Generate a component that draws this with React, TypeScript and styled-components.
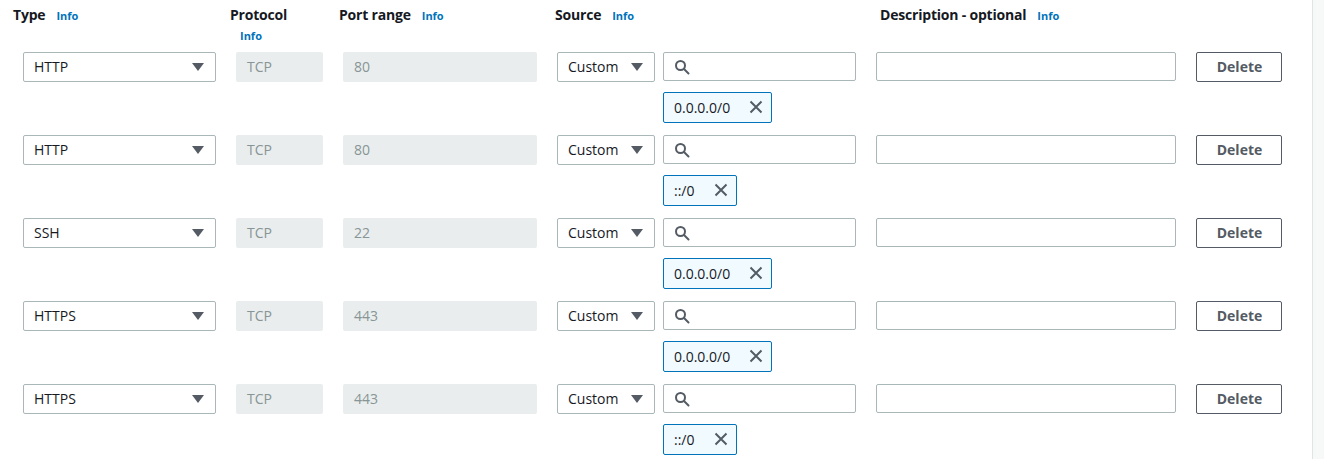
import React from "react";
import styled, { createGlobalStyle } from "styled-components";

const Global = createGlobalStyle`
  html, body { margin: 0; padding: 0; background: #ffffff; }
  body { font-family: "Open Sans", "Noto Sans", Arial, sans-serif; color: #16191f; }
  * { box-sizing: border-box; }
`;

const Page = styled.div`
  display: flex;
  width: 1324px;
  height: 459px;
  overflow: hidden;
`;

const Main = styled.div`
  width: 1313px;
  border-right: 1px solid #e1e4e5;
  padding-top: 5px;
`;

const Side = styled.div`
  flex: 1;
  background: #f7f8f8;
`;

const HeaderRow = styled.div`
  display: flex;
  padding-left: 13px;
  height: 47px;
`;

const HeaderCell = styled.div<{ $w?: number; $stack?: boolean }>`
  width: ${(p) => (p.$w ? `${p.$w}px` : "auto")};
  display: flex;
  flex-direction: ${(p) => (p.$stack ? "column" : "row")};
  align-items: flex-start;
  column-gap: 11px;
`;

const Label = styled.span`
  font-size: 14px;
  font-weight: 700;
  line-height: 20px;
  letter-spacing: -0.2px;
`;

const Info = styled.span<{ $indent?: number }>`
  font-size: 11px;
  font-weight: 700;
  color: #0073bb;
  line-height: 20px;
  padding-top: 1px;
  margin-left: ${(p) => p.$indent ?? 0}px;
`;

const Rows = styled.div`
  display: flex;
  flex-direction: column;
  padding-left: 23px;
`;

const Row = styled.div`
  display: grid;
  grid-template-columns: 193px 87px 194px 299px 300px 86px;
  column-gap: 20px;
  height: 83px;
  align-items: start;
`;

const Select = styled.div<{ $w?: number }>`
  height: 30px;
  border: 1px solid #aab7b8;
  border-radius: 2px;
  display: flex;
  align-items: center;
  justify-content: space-between;
  padding: 0 11px 1px 10px;
  font-size: 14px;
  width: ${(p) => (p.$w ? `${p.$w}px` : "auto")};
  flex-shrink: 0;
`;

const Caret = styled.span`
  width: 0;
  height: 0;
  border-left: 6px solid transparent;
  border-right: 6px solid transparent;
  border-top: 8px solid #545b64;
  margin-top: 1px;
`;

const Disabled = styled.div`
  height: 30px;
  background: #eaeded;
  border-radius: 2px;
  display: flex;
  align-items: center;
  padding: 0 0 1px 11px;
  font-size: 14px;
  color: #879596;
`;

const SourceCell = styled.div`
  display: flex;
  gap: 8px;
  align-items: flex-start;
`;

const SearchCol = styled.div`
  display: flex;
  flex-direction: column;
  gap: 11px;
  flex: 1;
`;

const TextInput = styled.div`
  height: 29px;
  border: 1px solid #aab7b8;
  border-radius: 2px;
  display: flex;
  align-items: center;
  padding-left: 10px;
`;

const Token = styled.div`
  align-self: flex-start;
  height: 31px;
  border: 1px solid #0073bb;
  background: #f1faff;
  border-radius: 2px;
  display: flex;
  align-items: center;
  gap: 18px;
  padding: 0 7px 1px 10px;
  font-size: 14px;
`;

const DeleteButton = styled.button`
  height: 30px;
  border: 1px solid #545b64;
  border-radius: 2px;
  background: #ffffff;
  color: #545b64;
  font-family: inherit;
  font-size: 14px;
  font-weight: 700;
  padding: 0 0 1px 1px;
`;

const SearchIcon = () => (
  <svg width="16" height="16" viewBox="0 0 16 16" fill="none" stroke="#545b64" strokeWidth="2">
    <circle cx="6.5" cy="6.5" r="4.5" />
    <path d="M10 10l4.5 4.5" strokeLinecap="round" />
  </svg>
);

const CloseIcon = () => (
  <svg width="16" height="16" viewBox="0 0 16 16" fill="none" stroke="#545b64" strokeWidth="2">
    <path d="M2.5 2.5l11 11M13.5 2.5l-11 11" />
  </svg>
);

const rules = [
  { type: "HTTP", port: "80", cidr: "0.0.0.0/0" },
  { type: "HTTP", port: "80", cidr: "::/0" },
  { type: "SSH", port: "22", cidr: "0.0.0.0/0" },
  { type: "HTTPS", port: "443", cidr: "0.0.0.0/0" },
  { type: "HTTPS", port: "443", cidr: "::/0" },
];

export default function App() {
  return (
    <Page>
      <Global />
      <Main>
        <HeaderRow>
          <HeaderCell $w={217}>
            <Label>Type</Label>
            <Info>Info</Info>
          </HeaderCell>
          <HeaderCell $w={109} $stack>
            <Label>Protocol</Label>
            <Info $indent={10}>Info</Info>
          </HeaderCell>
          <HeaderCell $w={216}>
            <Label>Port range</Label>
            <Info>Info</Info>
          </HeaderCell>
          <HeaderCell $w={325}>
            <Label>Source</Label>
            <Info>Info</Info>
          </HeaderCell>
          <HeaderCell>
            <Label>Description - optional</Label>
            <Info>Info</Info>
          </HeaderCell>
        </HeaderRow>
        <Rows>
          {rules.map((r, i) => (
            <Row key={i}>
              <Select>
                {r.type}
                <Caret />
              </Select>
              <Disabled>TCP</Disabled>
              <Disabled>{r.port}</Disabled>
              <SourceCell>
                <Select $w={98}>
                  Custom
                  <Caret />
                </Select>
                <SearchCol>
                  <TextInput>
                    <SearchIcon />
                  </TextInput>
                  <Token>
                    {r.cidr}
                    <CloseIcon />
                  </Token>
                </SearchCol>
              </SourceCell>
              <TextInput />
              <DeleteButton>Delete</DeleteButton>
            </Row>
          ))}
        </Rows>
      </Main>
      <Side />
    </Page>
  );
}
